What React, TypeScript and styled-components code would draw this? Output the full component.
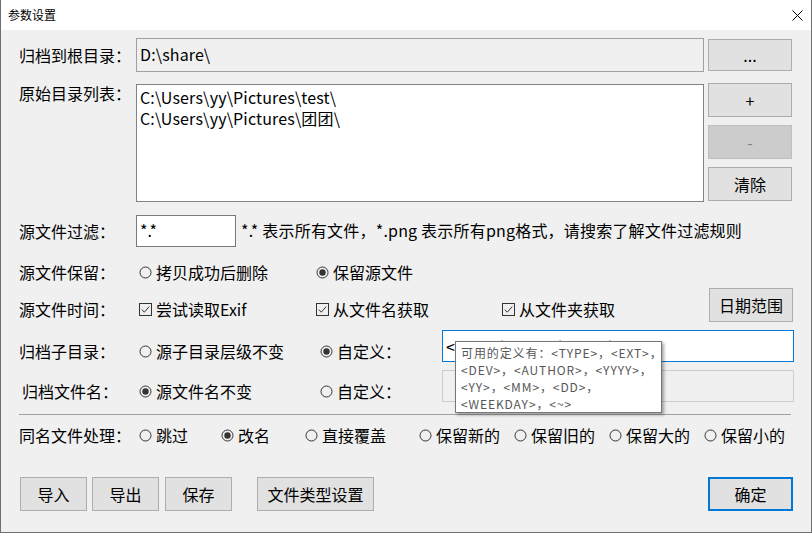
import React from "react";
import styled, { createGlobalStyle } from "styled-components";

const GlobalStyle = createGlobalStyle`
  html, body { margin: 0; padding: 0; background: #ffffff; }
  * { box-sizing: border-box; }
`;

const FONT = `"Noto Sans CJK SC", "Noto Sans", sans-serif`;

const Window = styled.div`
  width: 812px;
  height: 533px;
  display: flex;
  flex-direction: column;
  border: 1px solid #6f6f6f;
  border-top: none;
  background: #f0f0f0;
  font-family: ${FONT};
  font-size: 16px;
  color: #000;
  overflow: hidden;
`;

const TitleBar = styled.div`
  height: 30px;
  flex: none;
  background: #ffffff;
  display: flex;
  align-items: center;
  justify-content: space-between;
  padding: 0 8px 0 7px;
  font-size: 12px;
  line-height: 16px;
`;

const Body = styled.div`
  display: flex;
  flex-direction: column;
  padding: 0 17px 0 18px;
`;

const Row = styled.div<{ $mt: number; $h?: number; $align?: string }>`
  display: flex;
  align-items: ${(p) => p.$align ?? "flex-start"};
  margin-top: ${(p) => p.$mt}px;
  height: ${(p) => (p.$h ? `${p.$h}px` : "auto")};
  position: relative;
`;

const Label = styled.div<{ $indent?: number; $mt?: number }>`
  width: 117px;
  flex: none;
  padding-left: ${(p) => p.$indent ?? 0}px;
  margin-top: ${(p) => p.$mt ?? 0}px;
  line-height: 20px;
  white-space: nowrap;
`;

const TextBox = styled.div<{ $w: number; $h: number; $bg?: string; $border?: string }>`
  width: ${(p) => p.$w}px;
  height: ${(p) => p.$h}px;
  flex: none;
  background: ${(p) => p.$bg ?? "#ffffff"};
  border: 1px solid ${(p) => p.$border ?? "#7a7a7a"};
  padding: 4px 3px;
  line-height: 21px;
  white-space: nowrap;
  overflow: hidden;
  position: relative;
`;

const ReadOnlyBox = styled(TextBox)`
  padding-top: 5px;
  letter-spacing: 0.15px;
`;

const ListBox = styled(TextBox)`
  margin-top: 1px;
  padding: 2px 3px;
  letter-spacing: 0.15px;
`;

const ListLine = styled.div`
  height: 21px;
  line-height: 21px;
`;

const Btn = styled.div<{ $w: number; $h?: number; $disabled?: boolean; $default?: boolean }>`
  width: ${(p) => p.$w}px;
  height: ${(p) => p.$h ?? 34}px;
  flex: none;
  display: flex;
  align-items: center;
  justify-content: center;
  background: ${(p) => (p.$disabled ? "#cccccc" : "#e1e1e1")};
  border: ${(p) =>
    p.$default ? "2px solid #0078d7" : p.$disabled ? "1px solid #bfbfbf" : "1px solid #adadad"};
  color: ${(p) => (p.$disabled ? "#838383" : "#000")};
  line-height: 20px;
  white-space: nowrap;
`;

const BtnColumn = styled.div`
  display: flex;
  flex-direction: column;
  gap: 8px;
  margin-left: 4px;
`;

const Option = styled.div<{ $w?: number; $mt?: number }>`
  display: flex;
  align-items: center;
  gap: 4px;
  width: ${(p) => (p.$w ? `${p.$w}px` : "auto")};
  flex: none;
  padding-left: 3px;
  margin-top: ${(p) => p.$mt ?? 0}px;
  line-height: 20px;
  white-space: nowrap;
`;

const Hint = styled.div`
  margin-left: 5px;
  margin-top: 5px;
  line-height: 20px;
  white-space: nowrap;
  letter-spacing: 0.2px;
`;

const Separator = styled.div`
  margin-top: 12px;
  width: 772px;
  height: 1px;
  background: #a0a0a0;
`;

const Footer = styled.div`
  display: flex;
  margin-top: 32px;
  padding-left: 1px;
`;

const FooterGap = styled.div<{ $w: number }>`
  width: ${(p) => p.$w}px;
  flex: none;
`;

const Spacer = styled.div`
  flex: 1;
`;

const Tooltip = styled.div`
  position: absolute;
  left: 12px;
  top: 10px;
  width: 207px;
  height: 72px;
  background: #ffffff;
  border: 1px solid #767676;
  box-shadow: 2px 2px 3px rgba(0, 0, 0, 0.35);
  padding: 2px 0 0 5px;
  font-size: 12px;
  line-height: 17px;
  letter-spacing: 0.9px;
  color: #575757;
  white-space: nowrap;
  z-index: 2;
`;

const TipLine = styled.div`
  height: 17px;
`;

const FocusBox = styled(TextBox)`
  border-color: #0078d7;
  overflow: visible;
  padding: 0 3px;
  line-height: 30px;
`;

const Radio = ({ on }: { on?: boolean }) => (
  <svg width="13" height="13" viewBox="0 0 13 13">
    <circle cx="6.5" cy="6.5" r="5.5" fill="none" stroke="#333" strokeWidth="1" />
    {on && <circle cx="6.5" cy="6.5" r="3.2" fill="#333" />}
  </svg>
);

const Check = () => (
  <svg width="13" height="13" viewBox="0 0 13 13">
    <rect x="0.5" y="0.5" width="12" height="12" fill="none" stroke="#333" strokeWidth="1" />
    <path d="M2.8 6.6 L5.3 9.2 L10.2 3.6" fill="none" stroke="#333" strokeWidth="1" />
  </svg>
);

const CloseIcon = () => (
  <svg width="11" height="11" viewBox="0 0 11 11">
    <path d="M0.5 0.5 L10.5 10.5 M10.5 0.5 L0.5 10.5" stroke="#000" strokeWidth="1" />
  </svg>
);

export default function App() {
  return (
    <>
      <GlobalStyle />
      <Window>
        <TitleBar>
          <span>参数设置</span>
          <CloseIcon />
        </TitleBar>
        <Body>
          <Row $mt={8} $h={34} $align="center">
            <Label>归档到根目录：</Label>
            <ReadOnlyBox $w={568} $h={34} $bg="#f0f0f0" $border="#a0a0a0">
              D:\share\
            </ReadOnlyBox>
            <BtnColumn>
              <Btn $w={84} $h={32}>...</Btn>
            </BtnColumn>
          </Row>

          <Row $mt={11}>
            <Label>原始目录列表：</Label>
            <ListBox $w={568} $h={118} $border="#828282">
              <ListLine>C:\Users\yy\Pictures\test\</ListLine>
              <ListLine>C:\Users\yy\Pictures\团团\</ListLine>
            </ListBox>
            <BtnColumn>
              <Btn $w={84}>+</Btn>
              <Btn $w={84} $disabled>-</Btn>
              <Btn $w={84}>清除</Btn>
            </BtnColumn>
          </Row>

          <Row $mt={13} $h={32}>
            <Label $mt={6}>源文件过滤：</Label>
            <TextBox $w={100} $h={32}>*.*</TextBox>
            <Hint>*.* 表示所有文件，*.png 表示所有png格式，请搜索了解文件过滤规则</Hint>
          </Row>

          <Row $mt={15} $h={20}>
            <Label>源文件保留：</Label>
            <Option $w={177}><Radio />拷贝成功后删除</Option>
            <Option><Radio on />保留源文件</Option>
          </Row>

          <Row $mt={6} $h={34}>
            <Label $mt={11}>源文件时间：</Label>
            <Option $w={177} $mt={11}><Check />尝试读取Exif</Option>
            <Option $w={186} $mt={11}><Check />从文件名获取</Option>
            <Option $mt={11}><Check />从文件夹获取</Option>
            <Spacer />
            <Btn $w={84} $h={34} style={{ marginRight: 1 }}>日期范围</Btn>
          </Row>

          <Row $mt={8} $h={32}>
            <Label $mt={11}>归档子目录：</Label>
            <Option $w={181} $mt={11}><Radio />源子目录层级不变</Option>
            <Option $mt={11}><Radio on />自定义：</Option>
            <Spacer />
            <FocusBox $w={352} $h={32}>
              &lt;TYPE&gt;\&lt;YYYY&gt;\&lt;MM&gt;\
              <Tooltip>
                <TipLine>可用的定义有：&lt;TYPE&gt;，&lt;EXT&gt;，</TipLine>
                <TipLine>&lt;DEV&gt;，&lt;AUTHOR&gt;，&lt;YYYY&gt;，</TipLine>
                <TipLine>&lt;YY&gt;，&lt;MM&gt;，&lt;DD&gt;，</TipLine>
                <TipLine>&lt;WEEKDAY&gt;，&lt;~&gt;</TipLine>
              </Tooltip>
            </FocusBox>
          </Row>

          <Row $mt={8} $h={32}>
            <Label $mt={11} $indent={3}>归档文件名：</Label>
            <Option $w={181} $mt={11}><Radio on />源文件名不变</Option>
            <Option $mt={11}><Radio />自定义：</Option>
            <Spacer />
            <TextBox $w={352} $h={32} $bg="#f0f0f0" $border="#cccccc" />
          </Row>

          <Separator />

          <Row $mt={10} $h={20}>
            <Label>同名文件处理：</Label>
            <Option $w={82}><Radio />跳过</Option>
            <Option $w={84}><Radio on />改名</Option>
            <Option $w={114}><Radio />直接覆盖</Option>
            <Option $w={95}><Radio />保留新的</Option>
            <Option $w={95}><Radio />保留旧的</Option>
            <Option $w={95}><Radio />保留大的</Option>
            <Option><Radio />保留小的</Option>
          </Row>

          <Footer>
            <Btn $w={67}>导入</Btn>
            <FooterGap $w={5} />
            <Btn $w={67}>导出</Btn>
            <FooterGap $w={6} />
            <Btn $w={67}>保存</Btn>
            <FooterGap $w={25} />
            <Btn $w={117}>文件类型设置</Btn>
            <Spacer />
            <Btn $w={85} $default style={{ marginRight: 1 }}>确定</Btn>
          </Footer>
        </Body>
      </Window>
    </>
  );
}
